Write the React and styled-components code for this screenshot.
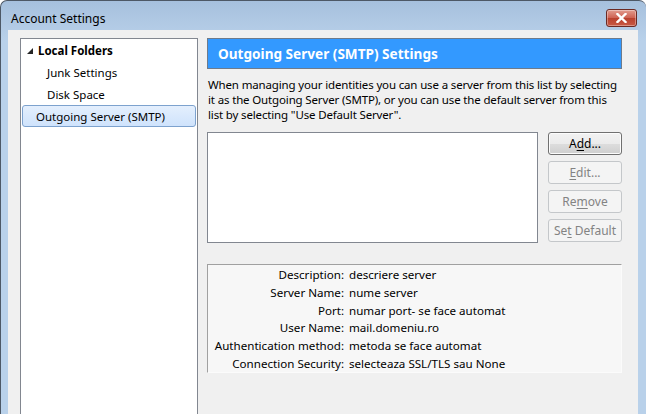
import React from 'react'
import styled, { createGlobalStyle } from 'styled-components'

const GlobalStyle = createGlobalStyle`
  html, body {
    margin: 0;
    padding: 0;
    background: #ffffff;
    overflow: hidden;
  }
  body {
    font-family: 'Noto Sans', 'Open Sans', Arial, sans-serif;
    font-size: 12px;
    color: #000;
  }
`

const Window = styled.div`
  width: 646px;
  height: 414px;
  box-sizing: border-box;
  display: flex;
  flex-direction: column;
  background: linear-gradient(#a6c0dd, #b9d1ea 40px);
  border: 1px solid #4d5866;
  border-right: none;
  border-bottom: none;
  border-radius: 7px 7px 0 0;
  padding: 0 8px 0 7px;
  overflow: hidden;
`

const TitleBar = styled.div`
  height: 29px;
  display: flex;
  align-items: center;
  justify-content: space-between;
  padding-left: 3px;
  flex-shrink: 0;
`

const Title = styled.span`
  font-size: 12px;
  color: #000;
  margin-top: 6px;
`

const CloseButton = styled.div`
  width: 31px;
  height: 18px;
  box-sizing: border-box;
  margin-top: 4px;
  margin-right: 1px;
  border: 1px solid #6b2a24;
  border-radius: 3px;
  background: linear-gradient(#e29c8f, #cf6353 48%, #b9412e 52%, #c95a45);
  display: flex;
  align-items: center;
  justify-content: center;
  box-shadow: inset 0 0 0 1px rgba(255, 255, 255, 0.35);
`

const Client = styled.div`
  flex: 1;
  background: #f0f0f0;
  display: flex;
  gap: 9px;
  padding: 8px 16px 0 12px;
  min-height: 0;
`

const Tree = styled.div`
  width: 178px;
  flex-shrink: 0;
  box-sizing: border-box;
  background: #fff;
  border: 1px solid #828790;
  border-bottom: none;
  padding: 0 1px;
  font-size: 11.5px;
`

const TreeItem = styled.div`
  height: 22px;
  box-sizing: border-box;
  display: flex;
  align-items: center;
  padding-left: ${(p) => p.$indent}px;
  font-weight: ${(p) => (p.$bold ? 700 : 400)};
  border: 1px solid ${(p) => (p.$selected ? '#7da2ce' : 'transparent')};
  border-radius: 3px;
  background: ${(p) =>
    p.$selected ? 'linear-gradient(#e4effd, #cfe3fc)' : 'transparent'};
`

const Arrow = styled.span`
  width: 0;
  height: 0;
  border-left: 6px solid transparent;
  border-bottom: 6px solid #262626;
  margin-right: 5px;
  margin-top: 2px;
`

const Content = styled.div`
  flex: 1;
  display: flex;
  flex-direction: column;
`

const Header = styled.div`
  height: 31px;
  box-sizing: border-box;
  background: #3399ff;
  border: 1px solid #6e7b8b;
  color: #fff;
  font-weight: 700;
  font-size: 13.6px;
  display: flex;
  align-items: center;
  padding-left: 10px;
`

const Description = styled.p`
  margin: 8px 0 0 1px;
  line-height: 15px;
  font-size: 11.5px;
  letter-spacing: -0.15px;
`

const ListRow = styled.div`
  display: flex;
  gap: 10px;
  margin-top: 10px;
`

const ListBox = styled.div`
  width: 331px;
  height: 111px;
  box-sizing: border-box;
  background: #fff;
  border: 1px solid #828790;
`

const ButtonColumn = styled.div`
  flex: 1;
  display: flex;
  flex-direction: column;
  gap: 6px;
`

const Button = styled.div`
  height: 23px;
  box-sizing: border-box;
  border: 1px solid ${(p) => (p.$disabled ? '#c4c7ca' : '#707070')};
  border-radius: 3px;
  background: ${(p) =>
    p.$disabled
      ? '#f4f4f4'
      : 'linear-gradient(#f2f2f2, #ebebeb 50%, #dddddd 51%, #cfcfcf)'};
  color: ${(p) => (p.$disabled ? '#838383' : '#000')};
  display: flex;
  align-items: center;
  justify-content: center;
  font-size: 12px;
  box-shadow: ${(p) => (p.$disabled ? 'none' : 'inset 0 0 0 1px #fcfcfc')};

  u {
    text-decoration-thickness: 1px;
    text-underline-offset: 2px;
  }
`

const Details = styled.div`
  margin-top: 21px;
  height: 109px;
  box-sizing: border-box;
  background: #f7f7f7;
  border-top: 1px solid #a0a0a0;
  border-left: 1px solid #a0a0a0;
  border-right: 1px solid #fbfbfb;
  border-bottom: 1px solid #fbfbfb;
  display: grid;
  grid-template-columns: 136px 1fr;
  grid-auto-rows: 17.8px;
  column-gap: 5px;
  align-content: start;
  padding-top: 1px;
  font-size: 11.6px;
`

const Label = styled.div`
  text-align: right;
  line-height: 17.8px;
  white-space: nowrap;
`

const Value = styled.div`
  line-height: 17.8px;
  white-space: nowrap;
`

const details = [
  ['Description:', 'descriere server'],
  ['Server Name:', 'nume server'],
  ['Port:', 'numar port- se face automat'],
  ['User Name:', 'mail.domeniu.ro'],
  ['Authentication method:', 'metoda se face automat'],
  ['Connection Security:', 'selecteaza SSL/TLS sau None'],
]

export default function App() {
  return (
    <>
      <GlobalStyle />
      <Window>
        <TitleBar>
          <Title>Account Settings</Title>
          <CloseButton>
            <svg width="11" height="10" viewBox="0 0 11 10">
              <path
                d="M1.5 1 L9.5 9 M9.5 1 L1.5 9"
                stroke="#fff"
                strokeWidth="2.4"
                strokeLinecap="square"
              />
            </svg>
          </CloseButton>
        </TitleBar>
        <Client>
          <Tree>
            <TreeItem $indent={4} $bold>
              <Arrow />
              Local Folders
            </TreeItem>
            <TreeItem $indent={24}>Junk Settings</TreeItem>
            <TreeItem $indent={24}>Disk Space</TreeItem>
            <TreeItem $indent={13} $selected>
              Outgoing Server (SMTP)
            </TreeItem>
          </Tree>
          <Content>
            <Header>Outgoing Server (SMTP) Settings</Header>
            <Description>
              When managing your identities you can use a server from this list
              by selecting it as the Outgoing Server (SMTP), or you can use the
              default server from this list by selecting "Use Default Server".
            </Description>
            <ListRow>
              <ListBox />
              <ButtonColumn>
                <Button>
                  <span>
                    A<u>d</u>d...
                  </span>
                </Button>
                <Button $disabled>
                  <span>
                    <u>E</u>dit...
                  </span>
                </Button>
                <Button $disabled>
                  <span>
                    Re<u>m</u>ove
                  </span>
                </Button>
                <Button $disabled>
                  <span>
                    Se<u>t</u> Default
                  </span>
                </Button>
              </ButtonColumn>
            </ListRow>
            <Details>
              {details.map(([label, value]) => (
                <React.Fragment key={label}>
                  <Label>{label}</Label>
                  <Value>{value}</Value>
                </React.Fragment>
              ))}
            </Details>
          </Content>
        </Client>
      </Window>
    </>
  )
}
